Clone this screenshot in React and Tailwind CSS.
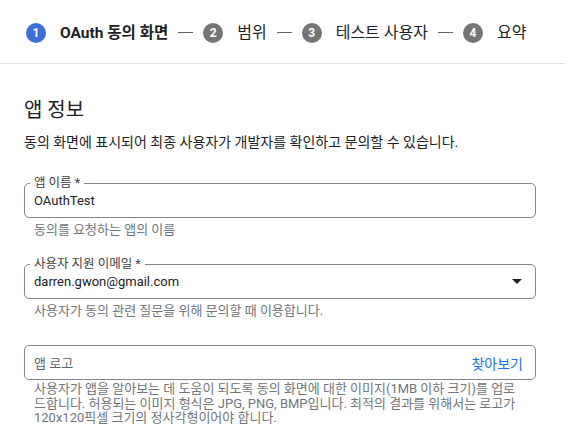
import React from 'react';

const FONT = { fontFamily: 'Roboto, "Noto Sans CJK KR", sans-serif' };

const Step = ({ num, label, active }) => (
  <div className="flex items-center">
    <div
      className={`w-[20px] h-[20px] rounded-full flex items-center justify-center text-white text-[12px] font-bold ${
        active ? 'bg-[#3c6fd8]' : 'bg-[#757575]'
      }`}
    >
      {num}
    </div>
    <span
      className={`ml-[14px] leading-[20px] text-[#202124] ${
        active ? 'text-[15.5px] font-bold' : 'text-[16px]'
      }`}
    >
      {label}
    </span>
  </div>
);

const Dash = () => <div className="mx-[10px] w-[15px] h-px bg-[#5f6368]" />;

const OutlinedField = ({ label, children }) => (
  <div className="relative h-[35px] border border-[#80868b] rounded-[5px] flex items-center pl-[9px] pr-[13px]">
    <span className="absolute left-[5px] top-[-8px] bg-white px-[4px] text-[12.5px] leading-[14px] text-[#3c4043]">
      {label}
    </span>
    {children}
  </div>
);

const Helper = ({ children }) => (
  <p className="mt-[4px] pl-[10px] text-[13px] leading-[16px] text-[#70757a]">{children}</p>
);

export default function App() {
  return (
    <div className="w-[568px] h-[443px] bg-white overflow-hidden" style={FONT}>
      {/* Stepper */}
      <div className="h-[64px] mr-[3px] pl-[26px] pt-[2px] flex items-center border-b border-[#e0e0e0]">
        <Step num="1" label="OAuth 동의 화면" active />
        <Dash />
        <Step num="2" label="범위" />
        <Dash />
        <Step num="3" label="테스트 사용자" />
        <Dash />
        <Step num="4" label="요약" />
      </div>

      <div className="pl-[24px] pr-[32px]">
        <h1 className="mt-[34px] text-[20px] leading-[24px] text-[#202124]">앱 정보</h1>
        <p className="mt-[10px] text-[14px] leading-[20px] text-[#202124]">
          동의 화면에 표시되어 최종 사용자가 개발자를 확인하고 문의할 수 있습니다.
        </p>

        {/* App name */}
        <div className="mt-[31px]">
          <OutlinedField label="앱 이름 *">
            <span className="text-[13px] text-[#202124]">OAuthTest</span>
          </OutlinedField>
          <Helper>동의를 요청하는 앱의 이름</Helper>
        </div>

        {/* Support email */}
        <div className="mt-[26px]">
          <OutlinedField label="사용자 지원 이메일 *">
            <span className="flex-1 text-[13px] text-[#202124]">darren.gwon@gmail.com</span>
            <div className="w-0 h-0 border-l-[5px] border-r-[5px] border-t-[5px] border-l-transparent border-r-transparent border-t-[#202124]" />
          </OutlinedField>
          <Helper>사용자가 동의 관련 질문을 위해 문의할 때 이용합니다.</Helper>
        </div>

        {/* App logo */}
        <div className="mt-[26px]">
          <div className="h-[35px] border border-[#80868b] rounded-[5px] flex items-center pl-[9px] pr-[12px] pt-[3px]">
            <span className="flex-1 text-[13px] text-[#5f6368]">앱 로고</span>
            <span className="text-[14px] text-[#1a73e8]">찾아보기</span>
          </div>
          <p className="mt-[2px] pl-[10px] text-[13px] leading-[14.5px] text-[#70757a] whitespace-nowrap">
            사용자가 앱을 알아보는 데 도움이 되도록 동의 화면에 대한 이미지(1MB 이하 크기)를 업로
            <br />
            드합니다. 허용되는 이미지 형식은 JPG, PNG, BMP입니다. 최적의 결과를 위해서는 로고가
            <br />
            120x120픽셀 크기의 정사각형이어야 합니다.
          </p>
        </div>
      </div>
    </div>
  );
}
